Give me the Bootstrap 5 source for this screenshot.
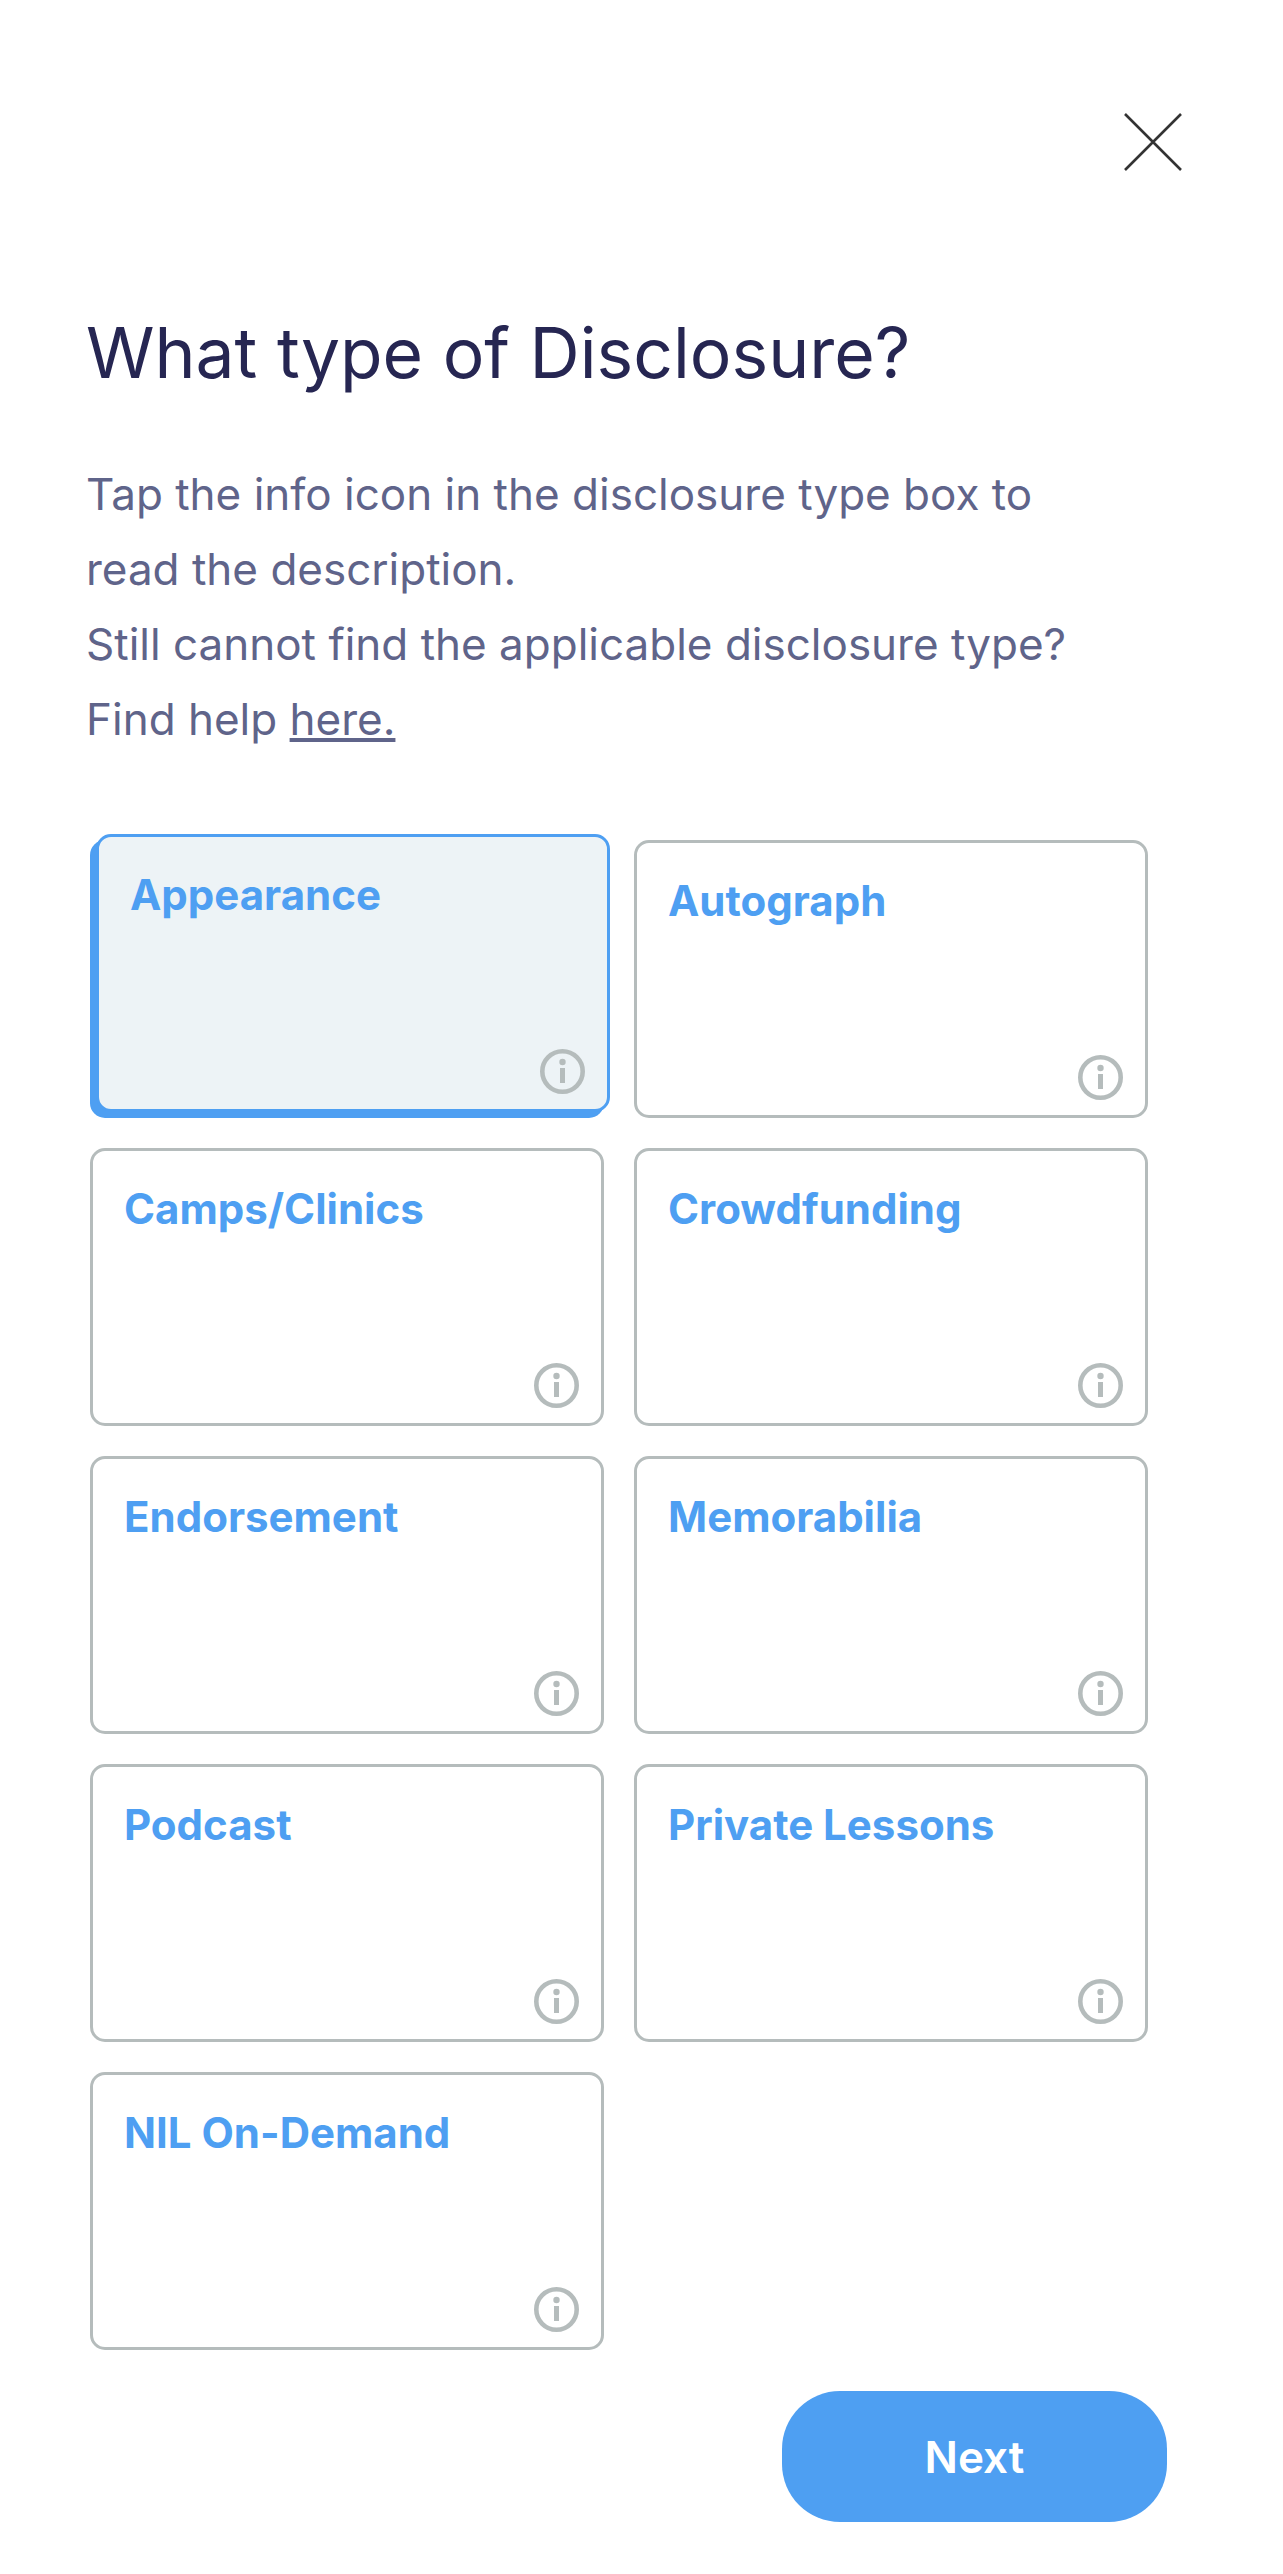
<!DOCTYPE html>
<html lang="en">
<head>
<meta charset="utf-8">
<title>What type of Disclosure?</title>
<link rel="stylesheet" href="https://cdn.jsdelivr.net/npm/bootstrap@5.3.0/dist/css/bootstrap.min.css">
<style>
body { background:#fff; font-family:"Inter","Liberation Sans",sans-serif; }
.sheet { width:1283px; height:2574px; padding:113px 87px 0 86px; }
.close-x { display:block; margin-left:auto; margin-right:13px; width:60px; height:58px; padding:0; border:0; background:none; line-height:0; }
.ttl { margin:142px 0 0; font-family:"Inter",sans-serif; font-size:69.5px; font-weight:400; line-height:80px; color:#262652; }
.intro { margin:64px 0 0; font-size:44px; font-weight:400; line-height:75px; color:#5f648a; width:1109px; }
.intro a { color:#5f648a; }
.type-grid { display:grid; grid-template-columns:514px 514px; grid-auto-rows:278px; column-gap:30px; row-gap:30px; margin:83px 0 0 4px; }
.type-box { position:relative; border:3px solid #b5bcbc; border-radius:15px; background:#fff; padding:30px 31px; font-size:42px; font-weight:700; line-height:56px; color:#4e9ff2; }
.type-box.picked { transform:translate(6px,-6px); border-color:#4e9ff2; background:#edf3f6; box-shadow:-6px 6px 0 #4e9ff2; }
.info-ico { position:absolute; right:22px; bottom:15px; width:45px; height:45px; }
.next-btn { display:block; margin:41px 29px 0 auto; width:385px; height:131px; border:0; border-radius:58px; background:#4e9ff2; color:#fff; font-size:44px; font-weight:600; }
</style>
</head>
<body>
<main class="sheet">
  <button type="button" class="close-x" aria-label="Close">
    <svg width="60" height="58" viewBox="0 0 60 58"><path d="M2 1 58 57M58 1 2 57" fill="none" stroke="#333" stroke-width="2.6"/></svg>
  </button>
  <h1 class="ttl">What type of Disclosure?</h1>
  <p class="intro">Tap the info icon in the disclosure type box to<br>read the description.<br>Still cannot find the applicable disclosure type?<br>Find help <a href="#">here.</a></p>
  <div class="type-grid">
    <div class="type-box picked">Appearance<svg class="info-ico" viewBox="0 0 45 45"><circle cx="22.5" cy="22.5" r="20.2" fill="none" stroke="#b5bcbc" stroke-width="4.6"/><circle cx="22.5" cy="13" r="3.2" fill="#b5bcbc"/><rect x="20" y="19" width="5" height="15" fill="#b5bcbc"/></svg></div>
    <div class="type-box">Autograph<svg class="info-ico" viewBox="0 0 45 45"><circle cx="22.5" cy="22.5" r="20.2" fill="none" stroke="#b5bcbc" stroke-width="4.6"/><circle cx="22.5" cy="13" r="3.2" fill="#b5bcbc"/><rect x="20" y="19" width="5" height="15" fill="#b5bcbc"/></svg></div>
    <div class="type-box">Camps/Clinics<svg class="info-ico" viewBox="0 0 45 45"><circle cx="22.5" cy="22.5" r="20.2" fill="none" stroke="#b5bcbc" stroke-width="4.6"/><circle cx="22.5" cy="13" r="3.2" fill="#b5bcbc"/><rect x="20" y="19" width="5" height="15" fill="#b5bcbc"/></svg></div>
    <div class="type-box">Crowdfunding<svg class="info-ico" viewBox="0 0 45 45"><circle cx="22.5" cy="22.5" r="20.2" fill="none" stroke="#b5bcbc" stroke-width="4.6"/><circle cx="22.5" cy="13" r="3.2" fill="#b5bcbc"/><rect x="20" y="19" width="5" height="15" fill="#b5bcbc"/></svg></div>
    <div class="type-box">Endorsement<svg class="info-ico" viewBox="0 0 45 45"><circle cx="22.5" cy="22.5" r="20.2" fill="none" stroke="#b5bcbc" stroke-width="4.6"/><circle cx="22.5" cy="13" r="3.2" fill="#b5bcbc"/><rect x="20" y="19" width="5" height="15" fill="#b5bcbc"/></svg></div>
    <div class="type-box">Memorabilia<svg class="info-ico" viewBox="0 0 45 45"><circle cx="22.5" cy="22.5" r="20.2" fill="none" stroke="#b5bcbc" stroke-width="4.6"/><circle cx="22.5" cy="13" r="3.2" fill="#b5bcbc"/><rect x="20" y="19" width="5" height="15" fill="#b5bcbc"/></svg></div>
    <div class="type-box">Podcast<svg class="info-ico" viewBox="0 0 45 45"><circle cx="22.5" cy="22.5" r="20.2" fill="none" stroke="#b5bcbc" stroke-width="4.6"/><circle cx="22.5" cy="13" r="3.2" fill="#b5bcbc"/><rect x="20" y="19" width="5" height="15" fill="#b5bcbc"/></svg></div>
    <div class="type-box">Private Lessons<svg class="info-ico" viewBox="0 0 45 45"><circle cx="22.5" cy="22.5" r="20.2" fill="none" stroke="#b5bcbc" stroke-width="4.6"/><circle cx="22.5" cy="13" r="3.2" fill="#b5bcbc"/><rect x="20" y="19" width="5" height="15" fill="#b5bcbc"/></svg></div>
    <div class="type-box">NIL On-Demand<svg class="info-ico" viewBox="0 0 45 45"><circle cx="22.5" cy="22.5" r="20.2" fill="none" stroke="#b5bcbc" stroke-width="4.6"/><circle cx="22.5" cy="13" r="3.2" fill="#b5bcbc"/><rect x="20" y="19" width="5" height="15" fill="#b5bcbc"/></svg></div>
  </div>
  <button type="button" class="btn next-btn">Next</button>
</main>
<script src="https://cdn.jsdelivr.net/npm/bootstrap@5.3.0/dist/js/bootstrap.bundle.min.js"></script>
</body>
</html>
